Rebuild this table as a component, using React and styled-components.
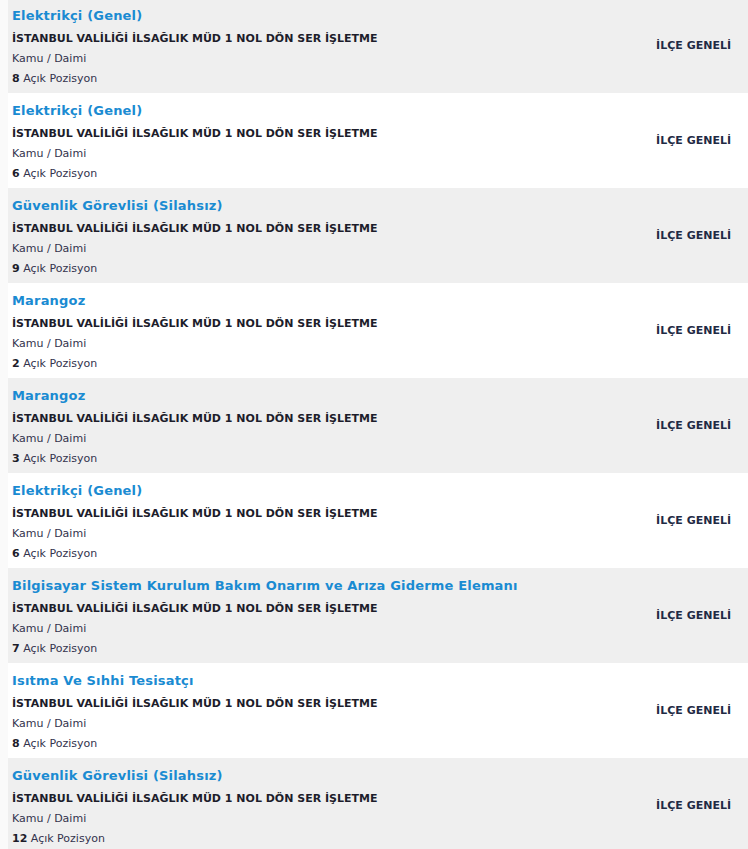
import React from "react";
import styled, { createGlobalStyle } from "styled-components";

const GlobalStyle = createGlobalStyle`
  body {
    margin: 0 0 0 8px;
    background: #fafafa;
    font-family: "DejaVu Sans", Verdana, sans-serif;
    overflow: hidden;
  }
`;

const List = styled.div`
  margin-top: -2px;
  display: flex;
  flex-direction: column;
`;

const Row = styled.div`
  height: 95px;
  box-sizing: border-box;
  display: flex;
  align-items: center;
  justify-content: space-between;
  padding: 0 17px 0 4px;
  background: ${(p) => (p.$odd ? "#efefef" : "#ffffff")};
`;

const Info = styled.div`
  display: flex;
  flex-direction: column;
  padding-top: 3px;
`;

const Title = styled.a`
  font-size: 13px;
  font-weight: bold;
  letter-spacing: 0.18px;
  color: #1a8bd2;
  text-decoration: none;
  line-height: 20px;
  height: 23px;
`;

const Company = styled.div`
  font-size: 11px;
  font-weight: bold;
  color: #1d1d2b;
  line-height: 20px;
`;

const Meta = styled.div`
  font-size: 11px;
  color: #33334d;
  line-height: 20px;
  b {
    color: #1d1d2b;
  }
`;

const Region = styled.div`
  font-size: 11px;
  font-weight: bold;
  color: #1f2a44;
  margin-top: -1px;
`;

const jobs = [
  ["Elektrikçi (Genel)", 8],
  ["Elektrikçi (Genel)", 6],
  ["Güvenlik Görevlisi (Silahsız)", 9],
  ["Marangoz", 2],
  ["Marangoz", 3],
  ["Elektrikçi (Genel)", 6],
  ["Bilgisayar Sistem Kurulum Bakım Onarım ve Arıza Giderme Elemanı", 7],
  ["Isıtma Ve Sıhhi Tesisatçı", 8],
  ["Güvenlik Görevlisi (Silahsız)", 12],
];

export default function App() {
  return (
    <>
      <GlobalStyle />
      <List>
        {jobs.map(([title, count], i) => (
          <Row key={i} $odd={i % 2 === 0}>
            <Info>
              <Title href="#">{title}</Title>
              <Company>İSTANBUL VALİLİĞİ İLSAĞLIK MÜD 1 NOL DÖN SER İŞLETME</Company>
              <Meta>Kamu / Daimi</Meta>
              <Meta>
                <b>{count}</b> Açık Pozisyon
              </Meta>
            </Info>
            <Region>İLÇE GENELİ</Region>
          </Row>
        ))}
      </List>
    </>
  );
}
